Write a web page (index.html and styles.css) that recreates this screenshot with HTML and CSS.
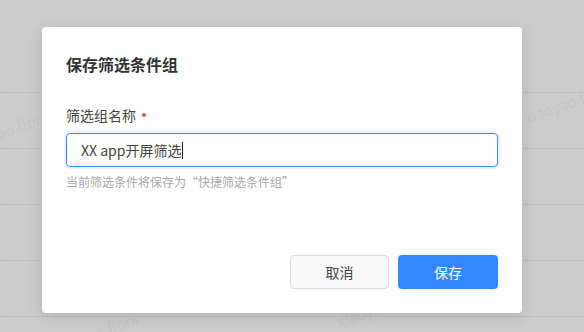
FILE: index.html
```html
<!DOCTYPE html>
<html lang="zh-CN">
<head>
    <meta charset="UTF-8">
    <meta name="viewport" content="width=device-width, initial-scale=1.0">
    <title>保存筛选条件组</title>
    <link rel="stylesheet" href="styles.css">
</head>
<body>

    <!-- 背景表格行 -->
    <div class="table-bg">
        <div class="row first"></div>
        <div class="row"></div>
        <div class="row"></div>
        <div class="row"></div>
        <div class="row"></div>
    </div>

    <!-- 水印 -->
    <div class="watermarks">
        <div class="watermark wm-1">xiaoyao.flora</div>
        <div class="watermark wm-2">xiaoyao.flora</div>
        <div class="watermark wm-3">xiaoyao.flora</div>
        <div class="watermark wm-4">xiaoyao</div>
    </div>

    <!-- 弹窗 -->
    <div class="overlay">
        <div class="dialog">
            <div class="dialog-title">保存筛选条件组</div>

            <div class="dialog-body">
                <div class="field-label">筛选组名称 <span class="required"></span></div>
                <div class="field-input">XX app开屏筛选<span class="caret"></span></div>
                <div class="field-hint">当前筛选条件将保存为“快捷筛选条件组”</div>
            </div>

            <div class="dialog-footer">
                <button class="btn btn-cancel">取消</button>
                <button class="btn btn-primary">保存</button>
            </div>
        </div>
    </div>

</body>
</html>
```

FILE: styles.css
```css
/* 全局 */
body {
    margin: 0;
    padding: 0;
    width: 584px;
    height: 332px;
    overflow: hidden;
    background: #cccccc;
    font-family: "Noto Sans CJK SC", "Noto Sans", sans-serif;
    position: relative;
}

/* 背景表格 */
.table-bg {
    display: flex;
    flex-direction: column;
}

.table-bg .row {
    height: 55px;
    border-bottom: 1px dotted #b3b3c6;
}

.table-bg .row.first {
    height: 92px;
}

/* 水印 */
.watermarks {
    position: absolute;
    top: 0;
    left: 0;
    width: 584px;
    height: 332px;
    overflow: hidden;
}

.watermark {
    position: absolute;
    font-size: 15px;
    color: #c4c4c4;
    transform: rotate(-20deg);
    white-space: nowrap;
}

.wm-1 { left: 522px; top: 92px; }
.wm-2 { left: -40px; top: 120px; }
.wm-3 { left: 50px; top: 322px; }
.wm-4 { left: 336px; top: 302px; }

/* 遮罩层 */
.overlay {
    position: absolute;
    top: 0;
    left: 0;
    right: 0;
    bottom: 0;
}

.dialog {
    margin: 27px 0 0 42px;
    width: 480px;
    height: 286px;
    box-sizing: border-box;
    padding: 25px 24px 24px;
    background: #ffffff;
    border-radius: 4px;
    box-shadow: 0 4px 16px rgba(0, 0, 0, 0.12);
    display: flex;
    flex-direction: column;
}

.dialog-title {
    font-size: 16px;
    line-height: 24px;
    font-weight: bold;
    color: #333333;
}

.dialog-body {
    flex: 1;
    padding-top: 29px;
}

.field-label {
    font-size: 14px;
    line-height: 20px;
    color: #444444;
    display: flex;
    align-items: center;
}

.required {
    display: inline-block;
    width: 4px;
    height: 4px;
    border-radius: 50%;
    background: #f25454;
    margin-left: 6px;
}

.field-input {
    margin-top: 8px;
    height: 34px;
    box-sizing: border-box;
    border: 1px solid #3a8cff;
    border-radius: 4px;
    box-shadow: 0 0 0 2px rgba(58, 140, 255, 0.1);
    padding-left: 14px;
    font-size: 14px;
    color: #444444;
    display: flex;
    align-items: center;
}

.caret {
    display: inline-block;
    width: 1px;
    height: 17px;
    background: #222222;
    margin-left: 1px;
}

.field-hint {
    margin-top: 6px;
    font-size: 12px;
    line-height: 18px;
    color: #a8a8a8;
}

.dialog-footer {
    display: flex;
    justify-content: flex-end;
    gap: 9px;
}

.btn {
    width: 100px;
    height: 34px;
    border-radius: 4px;
    font-family: inherit;
    font-size: 14px;
    cursor: pointer;
}

.btn-cancel {
    width: 99px;
    background: #f8f8f8;
    border: 1px solid #dddddd;
    color: #444444;
}

.btn-primary {
    background: #3388ff;
    border: none;
    color: #ffffff;
}
```
